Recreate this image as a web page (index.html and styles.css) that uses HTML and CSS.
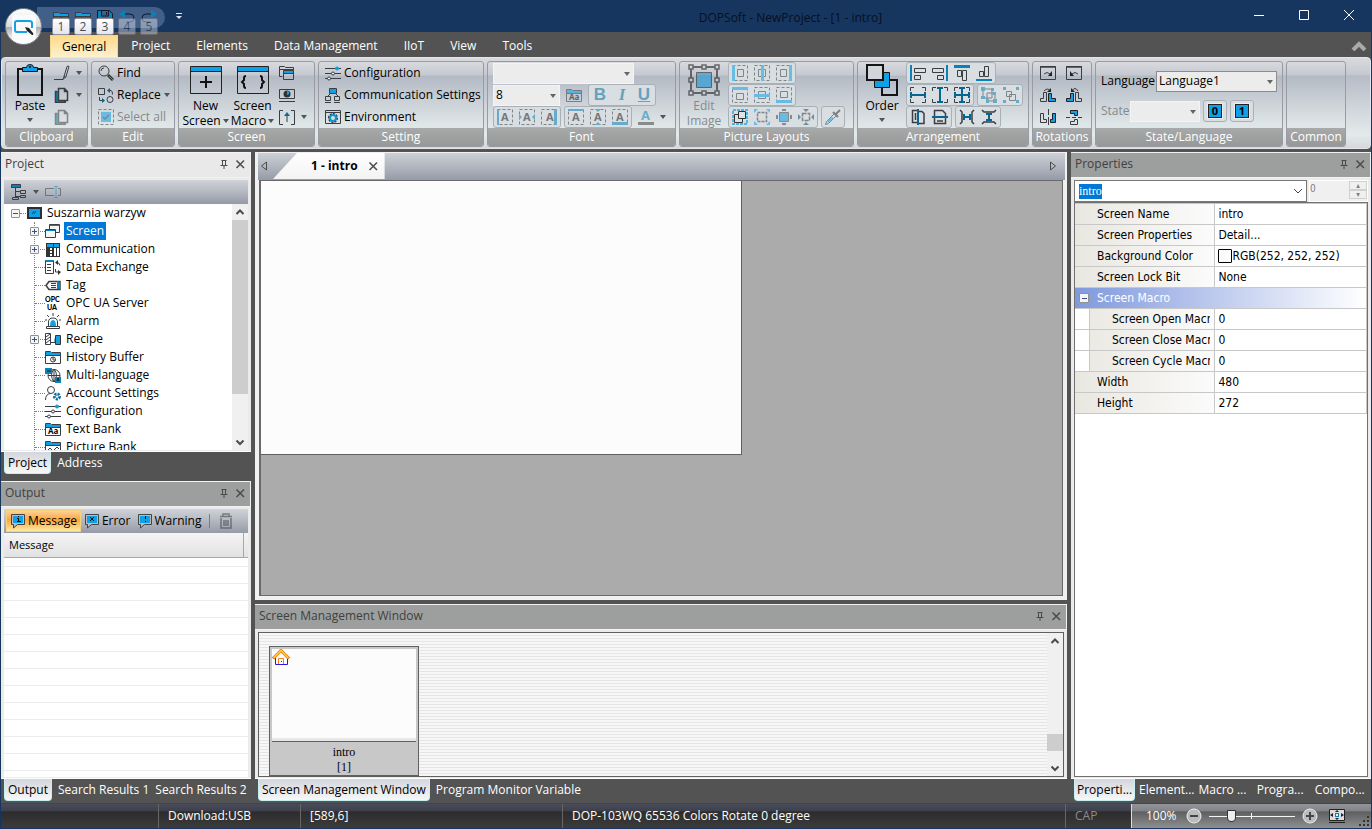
FILE: index.html
```html
<!DOCTYPE html>
<html lang="en">
<head>
  <meta charset="UTF-8">
  <meta name="viewport" content="width=device-width, initial-scale=1.0">
  <title>DOPSoft - NewProject - [1 - intro]</title>
  <link rel="stylesheet" href="styles.css">
</head>
<body>
  <!-- shared icons -->
  <svg class="defs" aria-hidden="true">
    <symbol id="pin" viewBox="0 0 16 16"><path class="g" d="M5.500 4.500h5M6.500 4.500v5M9.500 4.500v5M4.500 9.500h7M8 10v3"/></symbol>
    <symbol id="close" viewBox="0 0 16 16"><path class="g w" d="M4.500 4.500l7.500 7.500M12 4.500l-7.500 7.500"/></symbol>
    <symbol id="folder" viewBox="0 0 16 16"><path class="k" d="M.5 14.500v-12h5l1 1h9v11z"/><path class="b" d="M1 3h5l1 1h8v2H1z"/><path class="k" d="M1 6.500h14"/></symbol>
    <symbol id="sliders" viewBox="0 0 16 16"><path class="k" d="M0 3.500h16M0 8.500h16M0 13.500h16"/><circle class="b" cx="12" cy="3.500" r="2"/><circle class="k p" cx="8" cy="8.500" r="1.500"/><circle class="k p" cx="4" cy="13.500" r="1.500"/></symbol>
    <symbol id="up" viewBox="0 0 16 16"><path class="g w2" d="M4.500 10L8 6.500l3.500 3.500"/></symbol>
    <symbol id="down" viewBox="0 0 16 16"><path class="g w2" d="M4.500 6.500L8 10l3.500-3.500"/></symbol>
    <symbol id="bubble" viewBox="0 0 16 16"><path fill="#b9bcc2" stroke="#444" d="M1.500 1.500h13v10h-7l-4 3.500v-3.500h-2z"/><path fill="#10a0e6" d="M3 3h10v7H3z"/></symbol>
    <symbol id="frame" viewBox="0 0 16 16"><path class="k" stroke-dasharray="3 2" d="M.5 .5h15v15H.5z"/></symbol>
  </svg>

  <header class="titlebar">
    <button class="orb" aria-label="Application menu">
      <svg viewBox="0 0 24 24"><path fill="none" stroke="#14a0e4" stroke-width="2" d="M15 17H5q-2 0-2-2V8q0-2 2-2h12q3 0 3 2v5"/><path fill="#222" d="M13 12l4 1 4 5q1 2-1 2l-5-4z"/></svg>
    </button>
    <div class="quick">
      <button><svg viewBox="0 0 16 16"><use href="#folder"/><path class="k" d="M8 7v6M5 10h6"/></svg><span class="key">1</span></button>
      <button><svg viewBox="0 0 16 16"><use href="#folder"/></svg><span class="key">2</span></button>
      <button><svg viewBox="0 0 16 16"><path class="b2" d="M1 1h3v6h8V2l3 2v11H1z"/><path fill="none" stroke="#10202f" d="M.5.5h12l3 3v12H.5zM4.500 1v5h7V1M9.500 2v3"/></svg><span class="key">3</span></button>
      <button disabled><svg viewBox="0 0 16 16"><path fill="none" stroke="#071d33" d="M4 4h7q4 0 4 4t-4 4H7"/><path class="b2" d="M0 4l6-4v8z"/></svg><span class="key">4</span></button>
      <button disabled><svg viewBox="0 0 16 16"><path fill="none" stroke="#071d33" d="M12 4H5q-4 0-4 4t4 4h4"/><path class="b2" d="M16 4l-6-4v8z"/></svg><span class="key">5</span></button>
    </div>
    <button class="customize" aria-label="Customize"><svg viewBox="0 0 8 8"><path d="M1 1.500h6" stroke="#dce3ee" stroke-width="1"/><path fill="#dce3ee" d="M1 4h6L4 7z"/></svg></button>
    <h1>DOPSoft - NewProject - [1 - intro]</h1>
    <div class="window-buttons">
      <button aria-label="Minimize"><svg viewBox="0 0 12 12"><path d="M1 6.500h10"/></svg></button>
      <button aria-label="Maximize"><svg viewBox="0 0 12 12"><path d="M1.500 1.500h9v9h-9z"/></svg></button>
      <button aria-label="Close"><svg viewBox="0 0 12 12"><path d="M1 1l10 10M11 1L1 11"/></svg></button>
    </div>
  </header>

  <nav class="menu">
    <button class="active">General</button>
    <button>Project</button>
    <button>Elements</button>
    <button>Data Management</button>
    <button>IIoT</button>
    <button>View</button>
    <button>Tools</button>
    <button class="collapse" aria-label="Collapse ribbon"><svg viewBox="0 0 16 10"><path fill="none" stroke="#aaa" stroke-width="4" d="M2 9l6-6 6 6"/></svg></button>
  </nav>

  <section class="ribbon">
    <div class="group clipboard">
      <div class="tools">
        <button class="big">
          <svg viewBox="0 0 32 32"><path fill="none" stroke="#151515" stroke-width="2" d="M4 5h24v26H4z"/><path fill="#10a0e6" stroke="#151515" d="M8.500 7.500v-4h4q0-3 3.500-3t3.500 3h4v4z"/><circle cx="16" cy="3" r="1" fill="#151515"/></svg>
          <span>Paste</span><i class="tri"></i>
        </button>
        <div class="stack">
          <button class="mini"><svg viewBox="0 0 16 16"><path class="k" d="M0 14.500h9l1-3 3-10q1-1 2 0l-3 10-3 3M10 11.500l2 1"/></svg><i class="tri"></i></button>
          <button class="mini"><svg viewBox="0 0 16 16"><path class="b2" d="M1 4h3v10h8v2H1z"/><path class="k w" d="M4.500 1.500h6l3 3v9h-9zM10.500 1.500v3h3M3 4.500H1.500v11H11v-2"/></svg><i class="tri"></i></button>
          <button class="mini" disabled><svg viewBox="0 0 16 16"><path class="b2" d="M1 4h3v10h8v2H1z"/><path class="k w" d="M4.500 1.500h6l3 3v9h-9zM10.500 1.500v3h3M3 4.500H1.500v11H11v-2"/></svg></button>
        </div>
      </div>
      <h2>Clipboard</h2>
    </div>

    <div class="group edit">
      <div class="tools">
        <div class="stack">
          <button class="item"><svg viewBox="0 0 16 16"><circle class="k" cx="6" cy="6" r="5"/><path class="k" d="M3 6q0-3 3-3"/><path stroke="#333" stroke-width="3" d="M10 10l5 5"/><path stroke="#10a0e6" d="M11 11l4 4"/></svg>Find</button>
          <button class="item"><svg viewBox="0 0 16 16"><path class="k" d="M.5 1.500h6v6h-6zM10 3.500h3q1.500 0 1.500 4M1.500 10v3.500H5"/><circle class="k" cx="12" cy="12.500" r="3"/><path fill="#0b6288" d="M9 3.500L12 1v5zM7 13.500L4 11v5z"/></svg>Replace<i class="tri"></i></button>
          <button class="item" disabled><svg viewBox="0 0 16 16"><use href="#frame"/><path class="b" d="M3 3h10v10H3z"/><path class="k w" d="M5 8l2 2 4-4"/></svg>Select all</button>
        </div>
      </div>
      <h2>Edit</h2>
    </div>

    <div class="group screen">
      <div class="tools">
        <button class="big">
          <svg viewBox="0 0 32 32"><path class="b" d="M1 3h30v4H1z"/><path fill="none" stroke="#222" d="M.5 2.500h31v27H.5zM1 7.500h30"/><path stroke="#111" stroke-width="2" d="M10 18h12M16 12v12"/></svg>
          <span>New</span><span>Screen<i class="tri"></i></span>
        </button>
        <button class="big">
          <svg viewBox="0 0 32 32"><path class="b" d="M1 3h30v4H1z"/><path fill="none" stroke="#222" d="M.5 2.500h31v27H.5zM1 7.500h30"/><path fill="none" stroke="#111" stroke-width="2" d="M9 12q-2 0-2 2v2l-2 2 2 2v2q0 2 2 2M23 12q2 0 2 2v2l2 2-2 2v2q0 2-2 2"/></svg>
          <span>Screen</span><span>Macro<i class="tri"></i></span>
        </button>
        <div class="stack">
          <button class="mini"><svg viewBox="0 0 16 16"><path class="k" d="M3.500 11.500h-3V1.500h5l1 1h8v3M1 4.500h13"/><path class="b" d="M5 6h10v3H5z"/><path class="k" d="M4.500 5.500h10v9h-10zM5 8.500h10"/></svg></button>
          <button class="mini"><svg viewBox="0 0 16 16"><path class="k" d="M.5 2.500h15v9H.5zM0 14.500h16"/><circle fill="#333" cx="8" cy="7" r="3.500"/><path class="b" d="M8 4q3 0 2 3-2 2-2 0z"/></svg></button>
          <button class="mini"><svg viewBox="0 0 16 16"><path class="k" d="M4 1.500H.5v14H4M12 1.500h3.500v14H12M8 5v8"/><path fill="#0b6b97" d="M8 3l3 4H5z"/></svg><i class="tri"></i></button>
        </div>
      </div>
      <h2>Screen</h2>
    </div>

    <div class="group setting">
      <div class="tools">
        <div class="stack">
          <button class="item"><svg viewBox="0 0 16 16"><use href="#sliders"/></svg>Configuration</button>
          <button class="item"><svg viewBox="0 0 16 16"><path class="b" d="M5 2h6v5H5z"/><path class="k" d="M4.500 1.500h7v5h-7zM5 7l-3 3M11 7l3 3M.5 9.500h5v4h-5zM9.500 9.500h5v4h-5zM0 15.500h6M9 15.500h6"/></svg>Communication Settings</button>
          <button class="item"><svg viewBox="0 0 16 16"><path class="k" d="M.5 1.500h15v13H.5zM1 3.500h15"/><path fill="none" stroke="#333" stroke-width="2" stroke-dasharray="2 1" d="M4 9a4 4 0 0 1 8 0a4 4 0 0 1-8 0"/><circle cx="8" cy="9" r="3" fill="none" stroke="#1094d2" stroke-width="2"/></svg>Environment</button>
        </div>
      </div>
      <h2>Setting</h2>
    </div>

    <div class="group font">
      <div class="tools">
        <div class="stack">
          <div class="row"><span class="drop face"><select aria-label="Font" disabled><option></option></select></span></div>
          <div class="row">
            <span class="drop size"><select aria-label="Font size"><option>8</option></select></span>
            <button class="mini" disabled><svg viewBox="0 0 16 16"><use href="#folder"/><text x="3" y="13" class="tiny">Aa</text></svg></button>
            <div class="set dim"><button class="fmt b1">B</button><button class="fmt i1">I</button><button class="fmt u1">U</button></div>
          </div>
          <div class="row">
            <div class="set dim">
              <button><svg viewBox="0 0 16 16"><use href="#frame"/><path class="b2" d="M0 0h2v16H0z"/><text x="4" y="12" class="glyph">A</text></svg></button>
              <button><svg viewBox="0 0 16 16"><use href="#frame"/><path class="b2" d="M0 5l3 3-3 3zM16 5l-3 3 3 3z"/><text x="4" y="12" class="glyph">A</text></svg></button>
              <button><svg viewBox="0 0 16 16"><use href="#frame"/><path class="b2" d="M13 0h3v16h-3z"/><text x="5" y="12" class="glyph">A</text></svg></button>
            </div>
            <div class="set dim">
              <button><svg viewBox="0 0 16 16"><use href="#frame"/><path class="b2" d="M0 0h16v2H0z"/><text x="4" y="12" class="glyph">A</text></svg></button>
              <button><svg viewBox="0 0 16 16"><use href="#frame"/><path class="b2" d="M5 0h6L8 3zM5 16h6l-3-3z"/><text x="4" y="12" class="glyph">A</text></svg></button>
              <button><svg viewBox="0 0 16 16"><use href="#frame"/><path class="b2" d="M0 13h16v3H0z"/><text x="4" y="12" class="glyph">A</text></svg></button>
            </div>
            <button class="mini" disabled><svg viewBox="0 0 16 16"><text x="3" y="11" class="color-a">A</text><path fill="#444" d="M0 13h16v3H0z"/></svg><i class="tri"></i></button>
          </div>
        </div>
      </div>
      <h2>Font</h2>
    </div>

    <div class="group picture">
      <div class="tools">
        <button class="big" disabled>
          <svg viewBox="0 0 32 32"><path fill="#0a93d8" stroke="#111" d="M8.500 8.500h15v15h-15z"/><path fill="none" stroke="#111" stroke-width="2" d="M3 3h26v26H3z"/><path fill="#d4d7dc" stroke="#111" stroke-width="1.500" d="M1 1h4v4H1zM14 1h4v4h-4zM27 1h4v4h-4zM1 14h4v4H1zM27 14h4v4h-4zM1 27h4v4H1zM14 27h4v4h-4zM27 27h4v4h-4z"/></svg>
          <span>Edit</span><span>Image</span>
        </button>
        <div class="stack">
          <div class="row">
            <div class="set dim">
              <button><svg viewBox="0 0 16 16"><use href="#frame"/><path class="b" d="M0 0h3v16H0z"/><path class="k" d="M5.500 4.500h6v7h-6z"/></svg></button>
              <button><svg viewBox="0 0 16 16"><use href="#frame"/><path class="k" d="M4.500 4.500h7v7h-7z"/><path class="b" d="M7 0h3v16H7z"/></svg></button>
              <button><svg viewBox="0 0 16 16"><use href="#frame"/><path class="b" d="M13 0h3v16h-3z"/><path class="k" d="M4.500 4.500h6v7h-6z"/></svg></button>
            </div>
          </div>
          <div class="row">
            <div class="set dim">
              <button><svg viewBox="0 0 16 16"><use href="#frame"/><path class="b" d="M0 0h16v3H0z"/><path class="k" d="M4.500 6.500h7v6h-7z"/></svg></button>
              <button><svg viewBox="0 0 16 16"><use href="#frame"/><path class="k" d="M4.500 4.500h7v7h-7z"/><path class="b" d="M0 7h16v3H0z"/></svg></button>
              <button><svg viewBox="0 0 16 16"><use href="#frame"/><path class="b" d="M0 13h16v3H0z"/><path class="k" d="M4.500 4.500h7v6h-7z"/></svg></button>
            </div>
          </div>
          <div class="row">
            <div class="set">
              <button><svg viewBox="0 0 16 16"><path fill="none" stroke="#50b5df" stroke-width="2" stroke-dasharray="3 1" d="M1 1h14v14H1z"/><path fill="#dde2e4" stroke="#333" d="M2.500 5.500h8v8h-8z"/><path fill="#dde2e4" stroke="#333" d="M6.500 2.500h7v7h-7z"/></svg></button>
              <button class="dim"><svg viewBox="0 0 16 16"><path class="k w" stroke-dasharray="3 1" d="M3.500 3.500h9v9h-9z"/><path class="b" d="M0 0h4L0 4zM16 0v4l-4-4zM0 16v-4l4 4zM16 16h-4l4-4z"/></svg></button>
              <button class="dim"><svg viewBox="0 0 16 16"><path class="b" stroke="#444" d="M3.500 3.500h9v9h-9z"/><path fill="#445" d="M6 0h4v2H6zM6 14h4v2H6zM0 6h2v4H0zM14 6h2v4h-2z"/></svg></button>
              <button class="dim"><svg viewBox="0 0 16 16"><path class="k w" stroke-dasharray="4 1" d="M4.500 4.500h7v7h-7z"/><path fill="#17516d" d="M5 0h6L8 3zM5 16h6l-3-3zM0 5v6l3-3zM16 5v6l-3-3z"/></svg></button>
            </div>
            <div class="set dim"><button><svg viewBox="0 0 16 16"><path class="k" d="M1.500 12.500l8-8 2 2-8 8-3 1z"/><path class="b" d="M2 12l5-4 2 1-6 5z"/><path stroke="#333" stroke-width="2" d="M8 3l5 5M11 5l4-4"/></svg></button></div>
          </div>
        </div>
      </div>
      <h2>Picture Layouts</h2>
    </div>

    <div class="group arrange">
      <div class="tools">
        <button class="big">
          <svg viewBox="0 0 32 32"><path fill="none" stroke="#151515" stroke-width="2" d="M16 16h15v15H16z"/><path fill="#10a0e6" stroke="#151515" stroke-width="1" d="M8.500 8.500h15v15h-15z"/><path fill="#d2d5da" stroke="#151515" stroke-width="2" d="M1 1h16v15H1z"/></svg>
          <span>Order</span><i class="tri"></i>
        </button>
        <div class="stack">
          <div class="row">
            <div class="set">
              <button><svg viewBox="0 0 16 16"><path class="b2" d="M0 0h2v16H0z"/><path class="k" d="M4.500 3.500h11v4h-11zM4.500 10.500h6v4h-6z"/></svg></button>
              <button><svg viewBox="0 0 16 16"><path class="b2" d="M14 0h2v16h-2z"/><path class="k" d="M.5 3.500h11v4H.5zM5.500 10.500h6v4h-6z"/></svg></button>
              <button><svg viewBox="0 0 16 16"><path class="b2" d="M0 0h16v3H0z"/><path class="k" d="M3.500 5.500h4v6h-4zM8.500 5.500h4v10h-4z"/></svg></button>
              <button><svg viewBox="0 0 16 16"><path class="b2" d="M0 14h16v2H0z"/><path class="k" d="M3.500 6.500h4v5h-4zM8.500 1.500h4v10h-4z"/></svg></button>
            </div>
          </div>
          <div class="row">
            <div class="set">
              <button><svg viewBox="0 0 16 16"><path class="k" d="M4 .5H.5V4M12 .5h3.500V4M4 15.500H.5V12M12 15.500h3.500V12"/><path class="b3" d="M0 5h2v2h12V5h2v6h-2V9H2v2H0z"/></svg></button>
              <button><svg viewBox="0 0 16 16"><path class="k" d="M4 .5H.5V4M12 .5h3.500V4M4 15.500H.5V12M12 15.500h3.500V12"/><path class="b3" d="M5 0h6v2H9v12h2v2H5v-2h2V2H5z"/></svg></button>
              <button><svg viewBox="0 0 16 16"><path class="k" d="M4 .5H.5V4M12 .5h3.500V4M4 15.500H.5V12M12 15.500h3.500V12"/><path class="b3" d="M5 0h6v2H9v5h5V5h2v6h-2V9H9v5h2v2H5v-2h2V9H2v2H0V5h2v2h5V2H5z"/></svg></button>
            </div>
            <div class="set dim">
              <button><svg viewBox="0 0 16 16"><path class="k" d="M2 2h9v9H2zM6 6h8v8H6z"/><path class="b2" d="M0 0h4v4H0zM10 1h3v3h-3zM0 9h4v3H0zM12 5h3v3h-3zM5 12h3v4H5zM12 12h4v4h-4z"/></svg></button>
              <button><svg viewBox="0 0 16 16"><path class="k" d="M3.500 4.500h5v5h-5zM6.500 7.500h6v6h-6z"/><path class="b2" d="M0 0h3v3H0zM13 0h3v3h-3zM0 13h3v3H0zM13 13h3v3h-3z"/></svg></button>
            </div>
          </div>
          <div class="row">
            <div class="set">
              <button><svg viewBox="0 0 16 16"><path class="k w" d="M7 1.500H2.500v12H7M9 2.500h3l2 2v10H9M5.500 4v7"/><path class="b3" d="M7 0h2v16H7z"/></svg></button>
              <button><svg viewBox="0 0 16 16"><path class="k w" d="M2.500 7V1.500h8l3 3V7M2.500 9v5.500h11V9M5 12h6"/><path class="b3" d="M0 7h16v2H0z"/></svg></button>
            </div>
            <div class="set">
              <button><svg viewBox="0 0 16 16"><path class="k w" d="M1 1l2 2v10l-2 2M15 1l-2 2v10l2 2"/><path class="b3" d="M4 5h2v2h4V5h2v6h-2V9H6v2H4z"/></svg></button>
              <button><svg viewBox="0 0 16 16"><path class="k w" d="M1 1l2 2h10l2-2M1 15l2-2h10l2 2"/><path class="b3" d="M5 4h6v2H9v4h2v2H5v-2h2V6H5z"/></svg></button>
            </div>
          </div>
        </div>
      </div>
      <h2>Arrangement</h2>
    </div>

    <div class="group rotate">
      <div class="tools">
        <button class="mini"><svg viewBox="0 0 16 16"><path class="b2" d="M0 1h16v2H0z"/><path class="k" d="M.5 1.500h15v13H.5zM4 9q3-3 6 0"/><path fill="#222" d="M12 6v5H8z"/></svg></button>
        <button class="mini"><svg viewBox="0 0 16 16"><path class="b2" d="M0 1h16v2H0z"/><path class="k" d="M.5 1.500h15v13H.5zM12 9q-3-3-6 0"/><path fill="#222" d="M4 6v5h4z"/></svg></button>
        <button class="mini"><svg viewBox="0 0 16 16"><path class="k" d="M3.500 5.500h3v9h-6v-3h3zM4 4q4-4 6 0"/><path class="b" stroke="#222" d="M8.500 6.500h3v5h4v3h-7z"/><path fill="#222" d="M11 1v4H7z"/></svg></button>
        <button class="mini"><svg viewBox="0 0 16 16"><path class="k" d="M9.500 5.500h3v6h3v3h-6zM12 4Q9-1 6 4"/><path class="b" stroke="#222" d="M4.500 6.500h3v8h-7v-3h4z"/><path fill="#222" d="M5 1v4h4z"/></svg></button>
        <button class="mini"><svg viewBox="0 0 16 16"><path class="k" d="M.5 4.500h3v6h3v3h-6zM8.500 0v6M8.500 8v8"/><path class="b" stroke="#222" d="M12.500 4.500h3v9h-5v-3h2z"/></svg></button>
        <button class="mini"><svg viewBox="0 0 16 16"><path class="b" stroke="#222" d="M4.500 1.500h7v5h-3v-2h-4z"/><path class="k" d="M0 8.500h4M6 8.500h4M12 8.500h4M8.500 10.500h3v5h-7v-3h4z"/></svg></button>
      </div>
      <h2>Rotations</h2>
    </div>

    <div class="group language">
      <div class="tools">
        <div class="row"><label for="lang">Language</label><span class="drop lang"><select id="lang"><option>Language1</option></select></span></div>
        <div class="row">
          <label for="state" class="off">State</label><span class="drop state"><select id="state" disabled><option></option></select></span>
          <div class="set"><button class="bit"><b>0</b></button></div>
          <div class="set"><button class="bit"><b>1</b></button></div>
        </div>
      </div>
      <h2>State/Language</h2>
    </div>

    <div class="group common">
      <div class="tools"></div>
      <h2>Common</h2>
    </div>
  </section>

  <main>
    <div class="left">
      <section class="panel">
        <header class="caption current"><h3>Project</h3><button aria-label="Pin"><svg><use href="#pin"/></svg></button><button aria-label="Close"><svg><use href="#close"/></svg></button></header>
        <div class="frame">
          <div class="toolbar">
            <button class="mini"><svg viewBox="0 0 16 16"><path class="b2" d="M0 1h10v3H0z"/><path class="k" d="M.5.5h9v3h-9zM4.500 4v10M5 7.500h4M5 12.500h4M9.500 6.500h5v3h-5zM9.500 11.500h5v2h-5zM1.500 13.500h6v2h-6z"/></svg><i class="tri"></i></button>
            <button class="mini" disabled><svg viewBox="0 0 16 16"><path class="k" d="M9 4.500H.5v7H9M13 4.500h2.500v7H13"/><path stroke="#0a93d8" fill="none" d="M9 2.500h4M9 13.500h4M11 3v11"/></svg></button>
          </div>
          <div class="tree-box">
            <div class="tree">
              <div class="node root"><span class="toggle minus"></span><i class="dots"></i><svg viewBox="0 0 16 16"><path fill="#10a0e6" stroke="#2b3038" stroke-width="2" d="M2 3h13v10H2z"/><path fill="none" stroke="#104a70" d="M6 9l2-3M8 9l2-3"/></svg><span>Suszarnia warzyw</span></div>
              <ul>
                <li class="node selected"><span class="toggle"></span><i class="dots"></i><svg viewBox="0 0 16 16"><path class="k p" d="M4.500 1.500h10v8h-10z"/><path class="k p" d="M.5 6.500h10v8H.5z"/><path class="b2" d="M5 2h9v1H5zM1 7h9v1H1z"/></svg><span>Screen</span></li>
                <li class="node"><span class="toggle"></span><i class="dots"></i><svg viewBox="0 0 16 16"><path fill="#333" d="M1 2h14v14H1z"/><path class="b" d="M2 3h6v3H2zM9 3h5v3H9z"/><path fill="#fff" d="M5 7h2v2H5zM5 10h2v2H5zM5 13h2v2H5zM9 7h2v8H9zM12 7h2v8h-2z"/></svg><span>Communication</span></li>
                <li class="node"><i class="dots"></i><svg viewBox="0 0 16 16"><path class="k" d="M.5 1.500h8v13h-8zM2 5.500h4M2 8.500h4M2 11.500h4M11 3.500q4 0 4 3M10.500 10v3h3"/><path class="b2" d="M1 1h7v2H1z"/><path fill="#333" d="M10 3.500L13 1v5zM16 13l-3-2v5z"/></svg><span>Data Exchange</span></li>
                <li class="node"><i class="dots"></i><svg viewBox="0 0 16 16"><path class="k w" d="M1 8.500l3-4h11v8H4z"/><path class="k" d="M6 6.500h5M6 8.500h5M6 10.500h5"/><path class="b2" d="M12 4h2v8h-2z"/></svg><span>Tag</span></li>
                <li class="node"><i class="dots"></i><svg viewBox="0 0 16 16"><text x="0" y="7" class="opc">OPC</text><text x="2" y="15" class="opc">UA</text></svg><span>OPC UA Server</span></li>
                <li class="node"><i class="dots"></i><svg viewBox="0 0 16 16"><path class="k" d="M3.500 13V9q0-4 4.500-4t4.500 4v4M1.500 13.500h13v2h-13zM8 0v3M2 2l2 2M14 2l-2 2M0 7h2M14 7h2"/><path class="b" d="M5 13q0-6 3-6t3 6z"/></svg><span>Alarm</span></li>
                <li class="node"><span class="toggle"></span><i class="dots"></i><svg viewBox="0 0 16 16"><path class="k" d="M.5 2.500h5v11h-5zM1 6l4-3M1 9l4-3M1 12l4-3M6 11.500h4v-4"/><path class="b" stroke="#333" d="M10.500 4.500h5v9h-5z"/></svg><span>Recipe</span></li>
                <li class="node"><i class="dots"></i><svg viewBox="0 0 16 16"><use href="#folder"/><circle class="k" cx="8" cy="10.500" r="2.500"/><path class="k" d="M8 8v3h3"/></svg><span>History Buffer</span></li>
                <li class="node"><i class="dots"></i><svg viewBox="0 0 16 16"><circle class="k" cx="9" cy="8.500" r="6"/><path class="k" d="M9 2v13M3 8.500h12M9 2q-5 6 0 13M9 2q5 6 0 13"/><path class="b2" d="M0 1h7v6H0zM10 10h6v6h-6z"/><path stroke="#123" fill="none" d="M2 4h4M12 14l1-3 1 3"/></svg><span>Multi-language</span></li>
                <li class="node"><i class="dots"></i><svg viewBox="0 0 16 16"><circle class="k" cx="6" cy="5" r="3.500"/><path class="k" d="M.5 15q0-6 5-6.500"/><circle fill="none" stroke="#096b9b" stroke-width="3" stroke-dasharray="2 1" cx="12" cy="11.500" r="2.500"/></svg><span>Account Settings</span></li>
                <li class="node"><i class="dots"></i><svg viewBox="0 0 16 16"><use href="#sliders"/></svg><span>Configuration</span></li>
                <li class="node"><i class="dots"></i><svg viewBox="0 0 16 16"><use href="#folder"/><text x="3" y="13" class="tiny">Aa</text></svg><span>Text Bank</span></li>
                <li class="node"><i class="dots"></i><svg viewBox="0 0 16 16"><use href="#folder"/><path class="k" d="M2 12l3-3 3 3 4-4 2 2"/></svg><span>Picture Bank</span></li>
              </ul>
            </div>
            <div class="scroll"><svg><use href="#up"/></svg><div class="thumb"></div><svg><use href="#down"/></svg></div>
          </div>
        </div>
        <div class="tabs"><button class="active">Project</button><button>Address</button></div>
      </section>

      <section class="panel">
        <header class="caption"><h3>Output</h3><button aria-label="Pin"><svg><use href="#pin"/></svg></button><button aria-label="Close"><svg><use href="#close"/></svg></button></header>
        <div class="frame">
          <div class="toolbar filters">
            <button class="filter on"><svg viewBox="0 0 16 16"><use href="#bubble"/><path stroke="#111" d="M8.500 3v1M7 5.500h2M8.500 5v3M7 8.500h4"/></svg>Message</button>
            <button class="filter"><svg viewBox="0 0 16 16"><use href="#bubble"/><path stroke="#111" d="M6 4l4 4M10 4l-4 4"/></svg>Error</button>
            <button class="filter"><svg viewBox="0 0 16 16"><use href="#bubble"/><path stroke="#111" d="M8.500 3v3M8.500 8v1"/></svg>Warning</button>
            <i class="rule"></i>
            <button class="mini" disabled aria-label="Clear"><svg viewBox="0 0 16 16"><path class="k w" d="M2 3.500h12M5 3V1h6v2M3 5v10h10V5M6 7v6M8 7v6M10 7v6"/></svg></button>
          </div>
          <div class="log"><table><thead><tr><th>Message</th><th></th></tr></thead></table></div>
        </div>
        <div class="tabs"><button class="active">Output</button><button>Search Results 1</button><button>Search Results 2</button></div>
      </section>
    </div>

    <div class="center">
      <section class="document">
        <div class="doc-tabs">
          <button aria-label="Previous"><svg viewBox="0 0 8 10"><path class="g" d="M6.500 1v8l-5-4z"/></svg></button>
          <div class="doc-tab"><b>1 - intro</b><button aria-label="Close tab"><svg><use href="#close"/></svg></button></div>
          <button class="next" aria-label="Next"><svg viewBox="0 0 8 10"><path class="g" d="M1.500 1v8l5-4z"/></svg></button>
        </div>
        <div class="workspace"><div class="page"></div></div>
      </section>

      <section class="panel manager">
        <header class="caption"><h3>Screen Management Window</h3><button aria-label="Pin"><svg><use href="#pin"/></svg></button><button aria-label="Close"><svg><use href="#close"/></svg></button></header>
        <div class="frame">
          <div class="screens">
            <figure>
              <div class="preview"><svg viewBox="0 0 18 17"><path fill="#fff" stroke="#2a14e8" d="M3.500 9v6.500h12V9"/><path fill="none" stroke="#d85a10" stroke-width="3" d="M1 9.500l8-8 8 8"/><path fill="none" stroke="#ffc62e" stroke-width="2" d="M1.500 9L9 1.500 16.500 9"/><path fill="#fff" stroke="#f37e1c" d="M6.500 15V9.500h5V15"/><path fill="#2a14e8" d="M9 12h1v1H9z"/></svg></div>
              <figcaption>intro<br>[1]</figcaption>
            </figure>
            <div class="scroll"><svg><use href="#up"/></svg><div class="thumb"></div><svg><use href="#down"/></svg></div>
          </div>
        </div>
        <div class="tabs"><button class="active">Screen Management Window</button><button>Program Monitor Variable</button></div>
      </section>
    </div>

    <section class="panel right">
      <header class="caption"><h3>Properties</h3><button aria-label="Pin"><svg><use href="#pin"/></svg></button><button aria-label="Close"><svg><use href="#close"/></svg></button></header>
      <div class="frame">
        <div class="picker">
          <div class="combo"><input type="text" id="object" value="intro" aria-label="Object" autofocus><button aria-label="Open list"><svg viewBox="0 0 10 6"><path fill="none" stroke="#444" d="M1 1l4 4 4-4"/></svg></button></div>
          <div class="spin"><input type="text" value="0" aria-label="Index" disabled><div><button aria-label="Up" disabled>&#9652;</button><button aria-label="Down" disabled>&#9662;</button></div></div>
        </div>
        <div class="sheet">
          <table>
            <tr><th>Screen Name</th><td>intro</td></tr>
            <tr><th>Screen Properties</th><td>Detail...</td></tr>
            <tr><th>Background Color</th><td><span class="color"><i></i>RGB(252, 252, 252)</span></td></tr>
            <tr><th>Screen Lock Bit</th><td>None</td></tr>
            <tr class="section"><th colspan="2"><span><i class="toggle minus"></i>Screen Macro</span></th></tr>
            <tr class="sub"><th>Screen Open Macro</th><td>0</td></tr>
            <tr class="sub"><th>Screen Close Macro</th><td>0</td></tr>
            <tr class="sub"><th>Screen Cycle Macro</th><td>0</td></tr>
            <tr><th>Width</th><td>480</td></tr>
            <tr><th>Height</th><td>272</td></tr>
          </table>
        </div>
      </div>
      <div class="tabs spread"><button class="active">Properti...</button><button>Element...</button><button>Macro ...</button><button>Progra...</button><button>Compo...</button></div>
    </section>
  </main>

  <footer>
    <span class="cell c1"></span>
    <span class="cell c2">Download:USB</span>
    <span class="cell c3">[589,6]</span>
    <span class="cell c4">DOP-103WQ 65536 Colors Rotate 0 degree</span>
    <span class="cell c5">CAP</span>
    <div class="zoom">
      <label for="zoom">100%</label>
      <button aria-label="Zoom out"><svg viewBox="0 0 16 16"><circle cx="8" cy="8" r="7" fill="#bbb" stroke="#eee"/><path stroke="#444" stroke-width="2" d="M4 8h8"/></svg></button>
      <span class="range"><input type="range" id="zoom" min="0" max="100" value="24"></span>
      <button aria-label="Zoom in"><svg viewBox="0 0 16 16"><circle cx="8" cy="8" r="7" fill="#bbb" stroke="#eee"/><path stroke="#444" stroke-width="2" d="M4 8h8M8 4v8"/></svg></button>
      <button class="fit" aria-label="Fit"><svg viewBox="0 0 16 16"><path fill="#ddd" stroke="#222" d="M.5 1.500h15v11H.5z"/><path fill="#222" d="M8 2l2 2H6zM8 12l2-2H6zM1 7l3-2v4zM15 7l-3-2v4zM0 14h16v1H0z"/><path class="b2" d="M6 5h4v4H6z"/><path fill="#eee" d="M7 6h2v2H7z"/></svg></button>
      <svg class="grip" viewBox="0 0 12 12"><path fill="#333" d="M8 0h2v2H8zM4 4h2v2H4zM8 4h2v2H8zM0 8h2v2H0zM4 8h2v2H4zM8 8h2v2H8z"/></svg>
    </div>
  </footer>

  <script>
    document.getElementById('object').select();
  </script>
</body>
</html>
```
FILE: styles.css
```css
* {
  box-sizing: border-box;
}
body {
  margin: 0;
  height: 100vh;
  display: flex;
  flex-direction: column;
  overflow: hidden;
  background: #535353;
  border: 1px solid #17365f;
  border-top: none;
  color: #000;
  font: 12px/18px "Open Sans", "Noto Sans", sans-serif;
}
button, input, select {
  font: inherit;
  color: inherit;
  margin: 0;
  padding: 0;
  border: none;
  background: none;
  border-radius: 0;
}
button {
  display: flex;
  align-items: center;
  justify-content: center;
  white-space: nowrap;
}
h1, h2, h3, ul, figure {
  margin: 0;
  padding: 0;
  font: inherit;
  list-style: none;
}
svg {
  display: block;
  width: 16px;
  height: 16px;
  flex: none;
}
.defs {
  position: absolute;
  width: 0;
  height: 0;
}
.k { fill: none; stroke: #3a3d42; }
.p { fill: #f4f4f4; }
.g { fill: none; stroke: #4b4b4b; }
.w { stroke-width: 1.5px; }
.w2 { stroke-width: 2px; }
.b { fill: #10a0e6; }
.b2 { fill: #0882b8; }
.b3 { fill: #07658f; }
.tiny { font: bold 8px "Open Sans", sans-serif; }
.glyph { font: bold 11px "Open Sans", sans-serif; fill: #222; }
.color-a { font: bold 13px "Open Sans", sans-serif; fill: #0d87bd; }
.opc { font: 900 7px "Lato", sans-serif; }
.tri {
  border: 3px solid transparent;
  border-top: 4px solid #50545a;
  border-bottom: none;
}

/* title bar */
.titlebar {
  position: relative;
  z-index: 2;
  display: flex;
  height: 32px;
  flex: none;
  background: #17365f;
}
.orb {
  position: absolute;
  left: 4px;
  top: 8px;
  width: 37px;
  height: 37px;
  border-radius: 50%;
  border: 1px solid #7c838c;
  background: linear-gradient(#fff 0%, #d9dbdd 50%, #a9adb1 52%, #fff 90%);
}
.orb svg {
  width: 24px;
  height: 24px;
  background: #fafafa;
  border-radius: 4px;
}
.quick {
  display: flex;
  gap: 6px;
  align-self: flex-start;
  margin: 7px 0 0 36px;
  padding: 3px 8px 0 16px;
  height: 21px;
  border-radius: 0 11px 11px 0;
  background: #415f88;
}
.quick button {
  position: relative;
  width: 16px;
  height: 16px;
}
.key {
  position: absolute;
  left: -1px;
  top: 8px;
  width: 18px;
  height: 17px;
  border: 1px solid #8d9199;
  border-radius: 2px;
  background: linear-gradient(#fff, #e4e5f0);
  color: #4c4c4c;
  line-height: 15px;
}
.quick button:disabled .key {
  opacity: .4;
}
.customize {
  margin-left: 10px;
}
.customize svg {
  width: 8px;
  height: 8px;
}
.titlebar h1 {
  flex: 1;
  padding: 9px 0 0 162px;
  text-align: center;
  color: #06101e;
}
.window-buttons {
  display: flex;
}
.window-buttons button {
  width: 45px;
  height: 30px;
}
.window-buttons svg {
  width: 12px;
  height: 12px;
  fill: none;
  stroke: #fff;
}

/* menu */
.menu {
  display: flex;
  height: 25px;
  flex: none;
  padding: 3px 4px 0 49px;
  color: #fff;
}
.menu button {
  padding: 0 13px;
}
.menu .active {
  padding: 0 11px;
  border: 1px solid #f4d68c;
  border-bottom: none;
  background: linear-gradient(#ffd98a, #fdf1cf);
  color: #000;
}
.menu .collapse {
  margin-left: auto;
  padding: 0;
}
.collapse svg {
  height: 10px;
}

/* ribbon */
.ribbon {
  display: flex;
  gap: 3px;
  flex: none;
  height: 92px;
  margin-bottom: 3px;
  padding: 3px 3px 1px 3px;
  border: 1px solid #e4e4e9;
  border-radius: 4px;
  background: linear-gradient(#d9dade 0%, #c5c9d0 18%, #b7bcc7 20%, #e3eaea 85%, #d5d8db 100%);
}
.group {
  display: flex;
  flex-direction: column;
  flex: none;
  border: 1px solid #989ca2;
  border-radius: 3px;
  background: linear-gradient(#d9dade 0%, #c5c9d0 15%, #b4bac5 17%, #dfe6e7 75%);
  overflow: hidden;
}
.clipboard { width: 83px; }
.edit { width: 84px; }
.screen { width: 137px; }
.setting { width: 166px; }
.font { width: 189px; }
.picture { width: 175px; }
.arrange { width: 172px; }
.rotate { width: 60px; }
.language { width: 188px; }
.common { width: 60px; }
.group h2 {
  height: 18px;
  line-height: 18px;
  text-align: center;
  white-space: nowrap;
  color: #fff;
  background: linear-gradient(#a7a9aa, #979998);
}
.tools {
  display: flex;
  flex: 1;
  padding: 0 5px;
}
.screen .tools { padding: 0 3px; }
.clipboard .tools { gap: 2px; }
.picture .tools, .arrange .tools { gap: 5px; }
.tools button:disabled, .off {
  color: #85898d;
}
.tools button:disabled svg, .toolbar button:disabled svg, .dim svg, .dim .fmt {
  opacity: .55;
}
.big {
  flex-direction: column;
  justify-content: flex-start;
  min-width: 38px;
  padding-top: 2px;
  line-height: 15px;
}
.screen .big { min-width: 47px; }
.big svg {
  width: 32px;
  height: 32px;
  margin-bottom: 2px;
}
.big > .tri { margin-top: 5px; }
.big span {
  display: flex;
  align-items: center;
  gap: 2px;
}
.stack {
  display: flex;
  flex-direction: column;
}
.mini, .item {
  height: 22px;
  padding: 0 3px;
  gap: 6px;
  justify-content: flex-start;
}
.item {
  padding: 0 1px;
  gap: 3px;
}
.row {
  display: flex;
  align-items: center;
  gap: 3px;
  height: 22px;
}
.set {
  display: flex;
  height: 22px;
  border: 1px solid #a9b0b6;
  border-radius: 3px;
  background: #d8dee1;
}
.set button {
  width: 22px;
}
.set .fmt {
  font: bold 17px "Liberation Sans", sans-serif;
  color: #0870a0;
}
.set .i1 { font: italic bold 17px "Liberation Serif", serif; }
.set .u1 { text-decoration: underline; }
.drop {
  position: relative;
  display: flex;
  height: 21px;
}
.drop::after {
  content: "";
  position: absolute;
  right: 4px;
  top: 9px;
  border: 3px solid transparent;
  border-top: 4px solid #666;
  border-bottom: none;
}
.drop select {
  appearance: none;
  width: 100%;
  padding: 0 2px;
  border: 1px solid #f4f4f4;
  background: #ececec;
  opacity: 1;
}
.face { width: 141px; }
.size { width: 67px; }
.lang { width: 123px; }
.lang select { border-color: #8c8c8c; }
.state { width: 70px; }
.rotate .tools {
  flex-wrap: wrap;
  padding: 0 2px;
  align-content: flex-start;
}
.rotate .mini { width: 26px; justify-content: center; }
.language .tools {
  flex-direction: column;
  gap: 8px;
  padding-top: 8px;
}
.language label { width: 52px; }
.language .off { width: 26px; }
.bit b {
  width: 14px;
  height: 14px;
  border: 1px solid #222;
  outline: 1px solid #eee;
  background: #10a0e6;
  font-size: 11px;
  line-height: 12px;
}

/* docking layout */
main {
  display: flex;
  gap: 4px;
  flex: 1;
  min-height: 0;
}
.left {
  display: grid;
  grid-template-rows: 324fr 322fr;
  grid-template-columns: minmax(0, 1fr);
  gap: 5px;
  width: 250px;
  flex: none;
}
.center {
  display: flex;
  flex-direction: column;
  gap: 4px;
  flex: 1;
  min-width: 0;
}
.panel {
  display: flex;
  flex-direction: column;
  min-height: 0;
}
.right {
  width: 300px;
}
.manager {
  height: 199px;
}
.caption {
  display: flex;
  align-items: center;
  flex: none;
  height: 26px;
  padding: 0 2px 2px 4px;
  border: 1px solid #f2f2f2;
  border-left: none;
  background: #9d9f9e;
  color: #404040;
}
.caption.current {
  background: #e9e9ea;
}
.caption h3 { flex: 1; }
.frame {
  display: flex;
  flex-direction: column;
  flex: 1;
  min-height: 0;
  padding: 2px 3px 1px 3px;
  background: #ebebeb;
  border-bottom: 1px solid #fff;
}
.toolbar {
  display: flex;
  align-items: center;
  flex: none;
  height: 24px;
  padding: 0 4px;
  background: linear-gradient(#d0d3d8, #959ba7);
}
.filters { padding: 0 2px; }
.tree-box {
  display: flex;
  flex: 1;
  min-height: 0;
  background: #fff;
}
.tree {
  flex: 1;
  overflow: hidden;
}
.tree ul {
  margin-left: 30px;
  border-left: 1px dotted #808080;
}
.node {
  position: relative;
  display: flex;
  align-items: center;
  height: 18px;
  white-space: nowrap;
}
.root { padding-left: 7px; }
.node svg { margin-right: 3px; }
.node > span:last-child {
  padding: 0 2px;
}
.selected > span:last-child {
  background: #0078d7;
  color: #fff;
}
.dots {
  width: 10px;
  border-top: 1px dotted #808080;
}
.root .dots { width: 6px; }
.toggle {
  position: relative;
  display: block;
  flex: none;
  width: 9px;
  height: 9px;
  border: 1px solid #919191;
  border-radius: 1px;
  background: linear-gradient(#35518f, #35518f) center / 5px 1px no-repeat, linear-gradient(#35518f, #35518f) center / 1px 5px no-repeat, #f5f5f5;
}
.toggle.minus {
  background: linear-gradient(#35518f, #35518f) center / 5px 1px no-repeat, #f5f5f5;
}
/* expander boxes sit over the dotted line */
li .toggle {
  position: absolute;
  left: -5px;
  top: 5px;
}
.scroll {
  display: flex;
  flex-direction: column;
  justify-content: space-between;
  width: 16px;
  background: #f0f0f0;
}
.thumb { background: #cdcdcd; }
.tree-box .scroll .thumb {
  flex: 1;
  margin-bottom: 40px;
}
.tabs {
  display: flex;
  align-items: flex-start;
  flex: none;
  height: 24px;
  padding-left: 3px;
  color: #fff;
}
.tabs button {
  height: 22px;
  padding: 0 3px;
}
.tabs .active {
  margin-right: 3px;
  border: 1px solid #c5f1f4;
  border-top: none;
  border-radius: 0 0 4px 4px;
  background: linear-gradient(#d3d6dc, #f6f7f7);
  color: #000;
}

/* output */
.filter {
  height: 22px;
  padding: 0 3px;
  gap: 2px;
}
.filter.on {
  border: 1px solid #f7d27c;
  background: linear-gradient(#fdd096 0%, #fba63c 45%, #fee9a2 100%);
}
.rule {
  width: 1px;
  height: 14px;
  margin: 0 5px;
  background: #777c85;
}
.log {
  flex: 1;
  background: repeating-linear-gradient(#fff 0 16px, #ececec 16px 17px);
}
.log table {
  width: 100%;
  border-collapse: collapse;
}
.log th {
  height: 24px;
  padding: 0 5px;
  border-bottom: 1px solid #a8a8a8;
  background: linear-gradient(#f4f4f4, #e2e2e2);
  font: 11px "Open Sans", sans-serif;
  text-align: left;
}
.log th + th {
  width: 5px;
  padding: 0;
  border-left: 1px solid #a8a8a8;
}

/* document */
.document {
  display: flex;
  flex-direction: column;
  flex: 1;
  min-height: 0;
  padding: 1px 2px 4px 3px;
  background: #f1f1f1;
}
.doc-tabs {
  display: flex;
  flex: none;
  height: 27px;
  padding: 0 8px 1px 2px;
  background: linear-gradient(#cdd0d6, #959ba7);
}
.doc-tab {
  display: flex;
  align-items: center;
  gap: 7px;
  margin-left: 5px;
  padding: 0 4px 0 38px;
  background: linear-gradient(#fff, #f3f3f3);
  clip-path: polygon(24px 0, 100% 0, 100% 100%, 0 100%);
}
.doc-tabs > button svg {
  width: 8px;
  height: 10px;
}
.doc-tabs .next { margin-left: auto; }
.workspace {
  flex: 1;
  min-height: 0;
  margin: 0 2px 0 1px;
  border: 1px solid #6a6a6a;
  border-left-width: 2px;
  background: #ababab;
  overflow: hidden;
}
.page {
  width: 481px;
  height: 274px;
  border-right: 1px solid #606060;
  border-bottom: 1px solid #606060;
  background: #fcfcfc;
}

/* screen manager */
.screens {
  display: flex;
  justify-content: space-between;
  flex: 1;
  padding-left: 10px;
  border: 1px solid #606060;
  background: repeating-linear-gradient(#f7f7f7 0 2px, #e5e5e5 2px 3px);
}
.screens figure {
  display: flex;
  flex-direction: column;
  width: 150px;
  margin-top: 13px;
  padding: 2px 2px 0 2px;
  border: 1px solid #606060;
  background: #c8c8c8;
}
.preview {
  flex: 1;
  border-bottom: 3px solid #e8e8e8;
  background: #fcfcfc;
}
.preview svg {
  width: 18px;
  height: 17px;
}
.screens figcaption {
  border-top: 1px solid #606060;
  padding: 3px 0 0 0;
  font: 12px/15px "Liberation Serif", serif;
  text-align: center;
}
.screens .scroll .thumb {
  flex: none;
  height: 17px;
  margin-top: 75px;
}

/* properties */
.right .frame, .right table {
  font-family: "DejaVu Sans Condensed", "DejaVu Sans", sans-serif;
}
.picker {
  display: flex;
  gap: 2px;
  height: 22px;
}
.combo {
  display: flex;
  flex: 1;
  min-width: 0;
  border: 1px solid #777;
  background: #fff;
}
.combo input {
  flex: 1;
  min-width: 0;
  padding-left: 4px;
  outline: none;
  font: 12px "Liberation Serif", serif;
}
.combo input::selection {
  background: #0078d7;
  color: #fff;
}
.combo button { width: 16px; }
.combo svg {
  width: 10px;
  height: 6px;
}
.spin {
  display: flex;
  width: 59px;
  border: 1px solid #fff;
  background: #f0f0f0;
  color: #808080;
}
.spin input {
  flex: 1;
  min-width: 0;
  height: 16px;
  font-size: 10px;
}
.spin div { width: 18px; }
.spin button {
  width: 18px;
  height: 9px;
  border: 1px solid #d0d0d0;
  font-size: 8px;
  line-height: 7px;
}
.sheet {
  flex: 1;
  border: 1px solid #707070;
  background: #fff;
}
.sheet table {
  width: 100%;
  table-layout: fixed;
  border-collapse: collapse;
  font-size: 12px;
}
.sheet th, .sheet td {
  height: 21px;
  padding: 0 0 0 3px;
  border: 1px solid #c8c8c8;
  border-left: none;
  font-weight: normal;
  line-height: 20px;
  text-align: left;
  white-space: nowrap;
  overflow: hidden;
}
.sheet th {
  width: 48%;
  padding: 0 4px 0 22px;
  background: linear-gradient(90deg, #e9e7e0, #fbfbfb);
  background-clip: padding-box;
}
.sheet .sub th {
  padding-left: 37px;
  overflow: clip;
  overflow-clip-margin: content-box;
  background: linear-gradient(#c8c8c8, #c8c8c8) 14px 0 / 1px 100% no-repeat, linear-gradient(#fff, #fff) 0 0 / 14px 100% no-repeat, linear-gradient(90deg, #e9e7e0, #fbfbfb);
}
.sheet .section th {
  padding: 0 0 0 4px;
  background: linear-gradient(90deg, #8099dd, #fff);
  color: #fff;
}
.section span, .color {
  display: flex;
  align-items: center;
}
.section span { gap: 8px; }
.section .toggle {
  width: 10px;
  height: 10px;
}
.color i {
  width: 14px;
  height: 14px;
  border: 1px solid #000;
  border-radius: 1px;
  background: #fcfcfc;
}
.spread button {
  flex: 1 1 0;
  padding: 0 2px;
  justify-content: flex-start;
}
.spread .active {
  margin-right: 2px;
}

/* status bar */
footer {
  display: flex;
  flex: none;
  height: 25px;
  border-top: 1px solid #444;
  background: linear-gradient(#484c5a 0%, #3d404a 30%, #2c2c2c 32%, #3c3c3c 100%);
  color: #fff;
}
.cell {
  padding: 3px 9px;
  border-right: 1px solid #666;
  white-space: nowrap;
}
.c1 { width: 158px; }
.c2 { width: 142px; }
.c3 { width: 262px; }
.c4 { flex: 1; }
.c5 { width: 66px; border-color: #ddd; color: #8b8b8b; }
.zoom {
  display: flex;
  align-items: center;
  width: 239px;
  padding-left: 14px;
  background: linear-gradient(#93959a 0%, #818387 30%, #5c5e60 32%, #8e8f90 100%);
}
.zoom label { margin-right: 9px; }
.range {
  display: flex;
  width: 98px;
  margin: 0 1px;
  padding: 0 6px;
  background: linear-gradient(#fff, #fff) center / 1px 6px no-repeat;
}
.range input {
  appearance: none;
  width: 100%;
  height: 14px;
  background: linear-gradient(#f4f4f4, #f4f4f4) center / 100% 1px no-repeat;
}
.range input::-webkit-slider-thumb {
  appearance: none;
  width: 9px;
  height: 12px;
  border: 1px solid #333;
  border-radius: 1px 1px 5px 5px;
  background: #eee;
}
.fit { margin-left: 11px; }
.grip {
  width: 12px;
  height: 12px;
  margin-left: auto;
  align-self: flex-end;
}
```
